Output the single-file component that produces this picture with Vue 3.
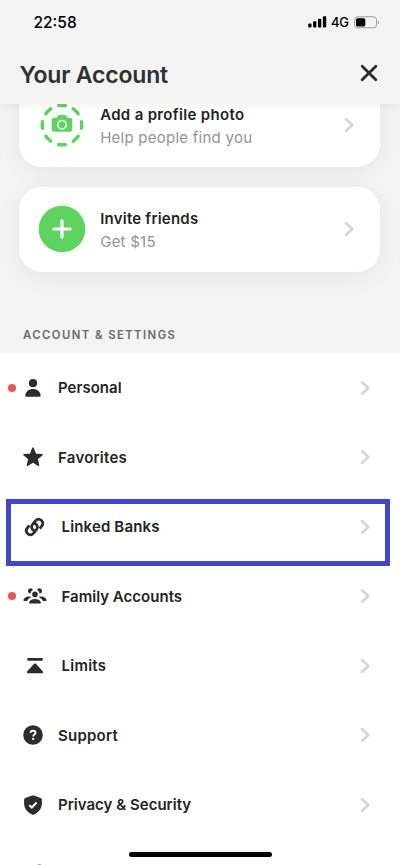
<script setup>
const cards = [
  { id: 'photo', title: 'Add a profile photo', sub: 'Help people find you' },
  { id: 'invite', title: 'Invite friends', sub: 'Get $15' }
]
const rows = [
  { id: 'personal', label: 'Personal', dot: true },
  { id: 'favorites', label: 'Favorites' },
  { id: 'banks', label: 'Linked Banks', wide: true },
  { id: 'family', label: 'Family Accounts', dot: true, wide: true },
  { id: 'limits', label: 'Limits', wide: true },
  { id: 'support', label: 'Support' },
  { id: 'privacy', label: 'Privacy & Security' }
]
</script>

<template>
  <main class="screen">
    <header class="header">
      <div class="status">
        <span class="time">22:58</span>
        <div class="indicators">
          <svg class="signal" width="19" height="12" viewBox="0 0 19 12">
            <rect x="0.2" y="7.5" width="3.3" height="4" rx="0.9" />
            <rect x="5.1" y="5.3" width="3.3" height="6.2" rx="0.9" />
            <rect x="10" y="2.8" width="3.3" height="8.7" rx="0.9" />
            <rect x="14.9" y="0.2" width="3.3" height="11.3" rx="0.9" />
          </svg>
          <span class="network">4G</span>
          <svg class="battery" width="26" height="13" viewBox="0 0 26 13">
            <rect x="0.6" y="0.8" width="22" height="11" rx="3" fill="none" stroke="#9b9b9b" />
            <rect x="2" y="2.2" width="9.3" height="8.2" rx="1.6" />
            <path d="M24 4.6Q26.3 6.4 24 8.2Z" fill="#999" />
          </svg>
        </div>
      </div>
      <div class="titlebar">
        <h1 class="title">Your Account</h1>
        <svg class="close" width="18" height="18" viewBox="0 0 18 18">
          <path d="M2.2 2.2 15.8 15.8M15.8 2.2 2.2 15.8" />
        </svg>
      </div>
    </header>

    <section class="cards">
      <article v-for="card in cards" :key="card.id" class="card">
        <svg v-if="card.id === 'photo'" class="avatar" width="48" height="48" viewBox="0 0 48 48">
          <circle cx="24" cy="24" r="19.7" fill="none" stroke="#5fd35f" stroke-width="3.5" stroke-linecap="round" pathLength="80" stroke-dasharray="4.4 5.6" stroke-dashoffset="2.2" />
          <path d="M16 16.8h2.4l1.1-1.7q.7-1 1.8-1h5.4q1.1 0 1.8 1l1.1 1.7H32q2.3 0 2.3 2.3v9.3q0 2.3-2.3 2.3H16q-2.3 0-2.3-2.3v-9.3q0-2.3 2.3-2.3Z" fill="#5fd35f" />
          <circle cx="24" cy="23.8" r="4.2" fill="#5fd35f" stroke="#fff" stroke-width="1.5" />
        </svg>
        <svg v-else class="avatar" width="48" height="48" viewBox="0 0 48 48">
          <circle cx="24" cy="24" r="23.3" fill="#5fd35f" />
          <path d="M24 15.9v16.2M15.9 24h16.2" stroke="#fff" stroke-width="3.2" stroke-linecap="round" />
        </svg>
        <div class="copy" :class="card.id">
          <strong class="card-title">{{ card.title }}</strong>
          <span class="card-sub">{{ card.sub }}</span>
        </div>
        <svg class="chevron" width="11" height="16" viewBox="0 0 11 16"><path d="M2 2.1 8.3 8 2 13.9" /></svg>
      </article>
    </section>

    <h2 class="section">ACCOUNT &amp; SETTINGS</h2>

    <ul class="list">
      <li v-for="row in rows" :key="row.id" class="row" :class="{ wide: row.wide }">
        <span class="dot" :class="{ on: row.dot }"></span>
        <svg class="icon" width="24" height="24" viewBox="0 0 24 24">
          <template v-if="row.id === 'personal'">
            <circle cx="12" cy="7.2" r="4.1" />
            <path d="M5.5 20.8Q4.2 20.8 4.3 19.5C4.6 15.4 8 13 12 13S19.4 15.4 19.7 19.5Q19.8 20.8 18.5 20.8Z" />
          </template>
          <path v-else-if="row.id === 'favorites'" d="m12 3.1 2.5 6 6.6.5-5 4.3 1.5 6.5L12 17l-5.6 3.4 1.5-6.5-5-4.3 6.6-.5Z" stroke="#2c2c2c" stroke-width="1.4" stroke-linejoin="round" />
          <g v-else-if="row.id === 'banks'" fill="none" stroke="#2c2c2c" stroke-width="2.8" stroke-linecap="butt">
            <path d="M12.1 16C8.8 15.2 7.5 11.7 9.7 9.1L12.6 5.6C16 1.9 22.1 6.7 19 10.7L16.7 13.6" />
            <path d="M10.9 8C14.2 8.8 15.5 12.3 13.3 14.9L10.4 18.4C7 22.1 .9 17.3 4 13.3L6.3 10.4" />
          </g>
          <template v-else-if="row.id === 'family'">
            <circle cx="12" cy="10.4" r="2.8" />
            <path d="M7.1 19.4q-1.3 0-.9-1.2C7 16 9.2 14.9 12 14.9s5 1.1 5.8 3.3q.4 1.2-.9 1.2Z" />
            <path d="M9.9 6A2.6 2.6 0 1 0 7.5 9.6Q7.5 7.2 9.9 6ZM14.1 6A2.6 2.6 0 1 1 16.5 9.6Q16.5 7.2 14.1 6Z" />
            <path d="M8.3 12.9C4.4 11.5 1.4 13.2.5 15.7Q.2 16.9 1.4 16.9H3.9Q5.2 14.3 8.3 12.9ZM15.7 12.9C19.6 11.5 22.6 13.2 23.5 15.7Q23.8 16.9 22.6 16.9H20.1Q18.8 14.3 15.7 12.9Z" />
          </template>
          <template v-else-if="row.id === 'limits'">
            <rect x="4.2" y="4" width="15.7" height="2.8" rx="1.2" />
            <path d="M11.1 9.8q.9-.8 1.8 0l6.8 7.4c1 1.1.3 2.1-1.1 2.1H5.4c-1.4 0-2.1-1-1.1-2.1Z" />
          </template>
          <template v-else-if="row.id === 'support'">
            <circle cx="12" cy="12" r="9.8" />
            <path d="M9.6 9.8C9.6 8.4 10.7 7.7 12 7.7 13.5 7.7 14.5 8.5 14.5 9.8 14.5 11.5 12.2 11.4 12.2 13.4" fill="none" stroke="#fff" stroke-width="1.9" />
            <circle cx="12.2" cy="15.9" r="1.15" fill="#fff" />
          </template>
          <template v-else>
            <path d="M11.2 2.6q.8-.4 1.6 0l6.9 2.5q1.2.4 1.2 1.7v3.7c0 5-3.1 8.8-7.8 10.9q-1.1.5-2.2 0C6.2 19.3 3.1 15.5 3.1 10.5V6.8q0-1.3 1.2-1.7Z" />
            <path d="m8.3 12.1 2.5 2.4 4.8-5" fill="none" stroke="#fff" stroke-width="2" />
          </template>
        </svg>
        <span class="label" :class="row.id">{{ row.label }}</span>
        <svg class="chevron" width="11" height="16" viewBox="0 0 11 16"><path d="M2 2.1 8.3 8 2 13.9" /></svg>
      </li>
    </ul>

    <div class="highlight"></div>
    <div class="home"></div>
    <div class="peek"></div>
  </main>
</template>

<style>
body { margin: 0; background: #fff; }
</style>

<style scoped>
.screen {
  position: relative;
  width: 400px;
  height: 865px;
  overflow: hidden;
  display: flex;
  flex-direction: column;
  background: #fff;
  color: #242424;
  font-family: Inter, "Liberation Sans", sans-serif;
}
.header {
  position: relative;
  z-index: 2;
  flex: none;
  box-sizing: border-box;
  height: 104px;
  background: #f3f3f3;
  box-shadow: 0 2px 10px rgba(0, 0, 0, 0.05);
}
.status {
  height: 44px;
  display: flex;
  justify-content: space-between;
  padding: 0 20px 0 33.5px;
  align-items: center;
  color: #000;
}
.time { font-size: 15.5px; font-weight: 550; }
.indicators { display: flex; align-items: center; }
.network { font-size: 13px; margin: 0 5px 0 4px; width: 18px; font-weight: 450; letter-spacing: -0.3px; }
.titlebar {
  height: 60px;
  display: flex;
  align-items: center;
  justify-content: space-between;
  padding: 0 22px 0 19.5px;
}
.title { margin: 2px 0 0; font-size: 23px; line-height: 30px; font-weight: 600; color: #303030; letter-spacing: -0.17px; }
.close { fill: none; stroke: #2c2c2c; stroke-width: 2.8; stroke-linecap: round; margin-top: -2px; }
.cards {
  flex: none;
  height: 249.5px;
  box-sizing: border-box;
  margin-top: -21.5px;
  padding: 0 20px 0 19px;
  display: flex;
  flex-direction: column;
  gap: 20px;
  background: #f3f3f3;
}
.card {
  height: 84.5px;
  flex: none;
  box-sizing: border-box;
  display: flex;
  align-items: center;
  padding: 0 25px 0 18.7px;
  background: #fff;
  border-radius: 23px;
  box-shadow: 0 4px 22px rgba(0, 0, 0, 0.055);
}
.avatar { flex: none; }
.copy { flex: 1; margin-left: 14.5px; padding-top: 1px; display: flex; flex-direction: column; }
.copy.photo { padding-top: 3px; }
.card-title { font-size: 15px; line-height: 23px; font-weight: 560; letter-spacing: 0.32px; }
.invite .card-title { letter-spacing: 0.22px; }
.card-sub { font-size: 15px; line-height: 23px; color: #949494; font-weight: 400; letter-spacing: 0.25px; }
.chevron { flex: none; fill: none; stroke: #d4d4d4; stroke-width: 2.6; stroke-linecap: round; stroke-linejoin: round; }
.section {
  position: relative;
  flex: none;
  box-sizing: border-box;
  height: 37px;
  margin: -16px 0 0;
  padding: 11px 23px 0;
  font-size: 11.3px;
  line-height: 16px;
  font-weight: 560;
  letter-spacing: 1.45px;
  color: #6a6a6a;
  background: #f3f3f3;
}
.list { list-style: none; margin: 0; padding: 0; flex: none; }
.row {
  height: 69.5px;
  box-sizing: border-box;
  display: flex;
  align-items: center;
  padding: 0 29.5px 0 7.5px;
}
.dot { width: 8px; height: 8px; border-radius: 50%; margin-right: 5.5px; }
.dot.on { background: #ed5650; }
.icon { fill: #2c2c2c; flex: none; }
.label { flex: 1; margin-left: 13px; padding-top: 1px; font-size: 15px; line-height: 22px; font-weight: 560; letter-spacing: 0.02px; white-space: nowrap; }
.label.favorites, .label.limits, .label.support { letter-spacing: 0.24px; }
.label.banks { letter-spacing: 0.15px; }
.wide .icon { margin-left: 1.5px; }
.wide .label { margin-left: 15px; }
.highlight {
  position: absolute;
  left: 6px;
  top: 499px;
  width: 384px;
  height: 67px;
  box-sizing: border-box;
  border: 5px solid #3f48cc;
}
.home {
  position: absolute;
  left: 128.5px;
  top: 852px;
  width: 143px;
  height: 5px;
  border-radius: 3px;
  background: #000;
}
.peek {
  position: absolute;
  left: 38px;
  top: 864px;
  width: 3px;
  height: 1px;
  background: #b0b0b0;
}
</style>
